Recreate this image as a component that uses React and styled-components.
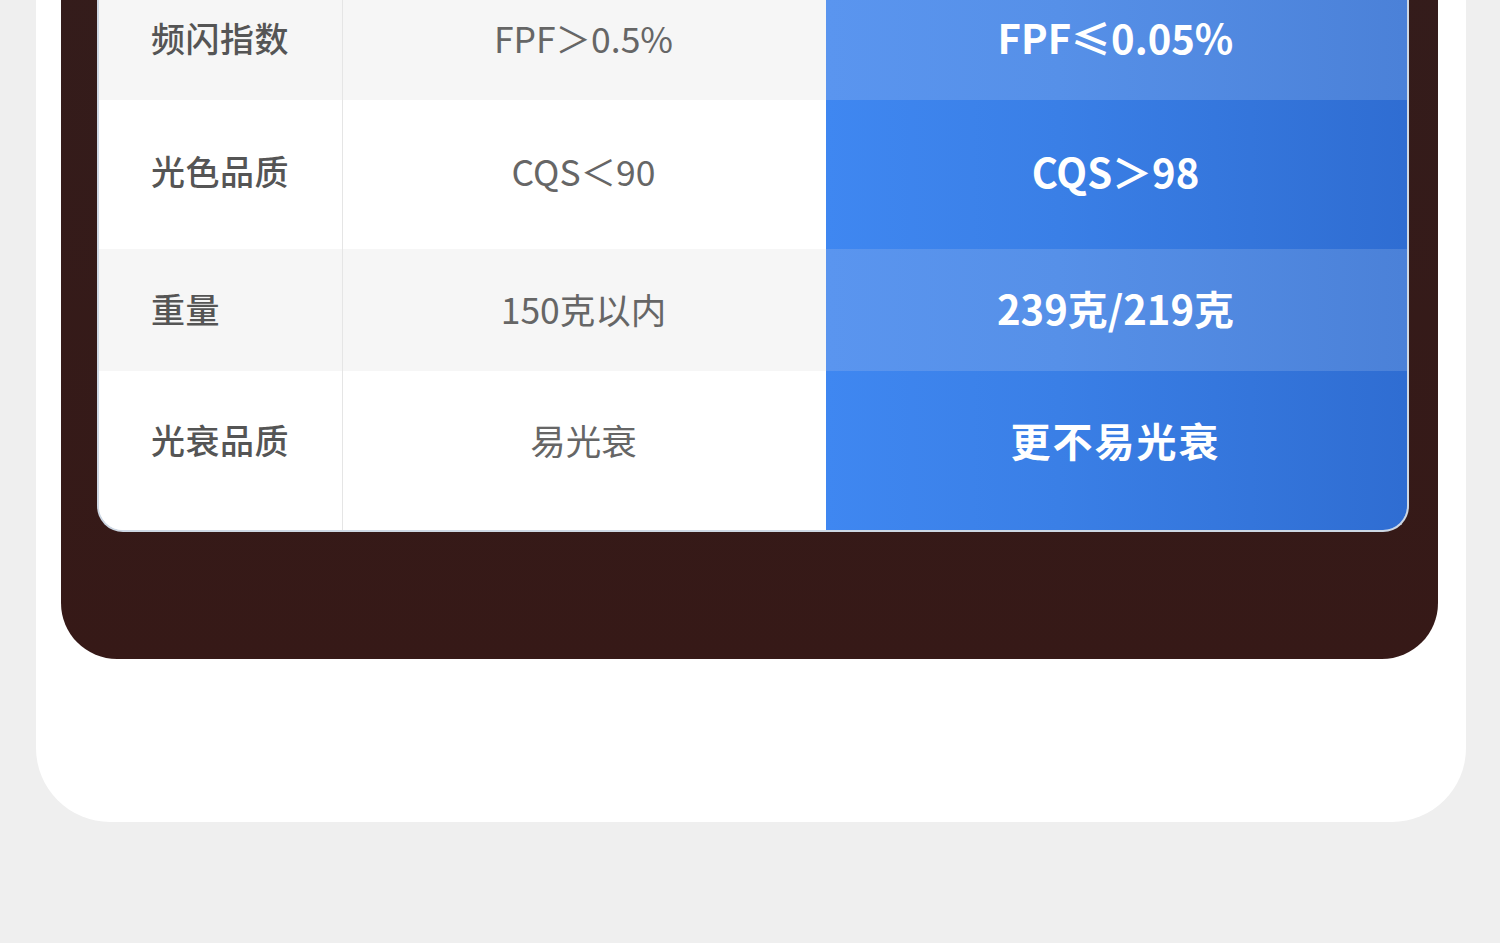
import { Fragment } from "react";
import styled, { createGlobalStyle } from "styled-components";

const Global = createGlobalStyle`
  html, body {
    margin: 0;
    padding: 0;
    background: #efefef;
    overflow: hidden;
    font-family: "Noto Sans CJK SC", "Noto Sans", sans-serif;
  }
`;

const Page = styled.div`
  margin-top: -22px;
  padding: 0 34px 0 36px;
`;

const Card = styled.div`
  background: #ffffff;
  border-radius: 0 0 74px 74px;
  padding: 0 28px 163px 25px;
`;

const Panel = styled.div`
  background: linear-gradient(180deg, #341c1b 0%, #361917 100%);
  border-radius: 0 0 56px 56px;
  padding: 0 29px 127px 36px;
`;

const Table = styled.div`
  display: grid;
  grid-template-columns: 244px 483px 1fr;
  border: 2px solid #cdd7e3;
  border-top: none;
  border-radius: 0 0 26px 26px;
  overflow: hidden;
  background: #fff;
`;

const Label = styled.div`
  display: flex;
  align-items: center;
  height: ${(p) => p.$h}px;
  padding: 0 0 ${(p) => p.$pb}px 52px;
  box-sizing: border-box;
  background: ${(p) => (p.$alt ? "#f6f6f6" : "#ffffff")};
  border-right: 1px solid #e5e5e5;
  color: #555555;
  font-size: 34px;
  font-weight: 500;
  letter-spacing: 0.5px;
`;

const Normal = styled.div`
  display: flex;
  align-items: center;
  justify-content: center;
  height: ${(p) => p.$h}px;
  padding: 0 2px ${(p) => p.$pb}px 0;
  box-sizing: border-box;
  background: ${(p) => (p.$alt ? "#f6f6f6" : "#ffffff")};
  color: #666666;
  font-size: 35.5px;
  font-weight: 400;
`;

const Highlight = styled.div`
  display: flex;
  align-items: center;
  justify-content: center;
  height: ${(p) => p.$h}px;
  padding: 0 2px ${(p) => p.$pb}px 0;
  box-sizing: border-box;
  background: ${(p) =>
    p.$alt
      ? "linear-gradient(90deg, #5a95ef 0%, #5690e8 40%, #4b81d8 100%)"
      : "linear-gradient(90deg, #3f87f1 0%, #3a7fe6 40%, #2f6dd2 100%)"};
  color: #ffffff;
  font-size: 40px;
  font-weight: 700;
  letter-spacing: ${(p) => p.$ls || 0}px;
`;

const rows = [
  { label: "频闪指数", normal: "FPF＞0.5%", best: "FPF≤0.05%", h: 122, pb: 4, alt: true },
  { label: "光色品质", normal: "CQS＜90", best: "CQS＞98", h: 149, pb: 8 },
  { label: "重量", normal: "150克以内", best: "239克/219克", h: 122, pb: 4, alt: true },
  { label: "光衰品质", normal: "易光衰", best: "更不易光衰", h: 159, pb: 22, ls: 2 },
];

export default function App() {
  return (
    <>
      <Global />
      <Page>
        <Card>
          <Panel>
            <Table>
              {rows.map((r) => (
                <Fragment key={r.label}>
                  <Label $h={r.h} $pb={r.pb} $alt={r.alt}>
                    {r.label}
                  </Label>
                  <Normal $h={r.h} $pb={r.pb} $alt={r.alt}>
                    {r.normal}
                  </Normal>
                  <Highlight $h={r.h} $pb={r.pb} $alt={r.alt} $ls={r.ls}>
                    {r.best}
                  </Highlight>
                </Fragment>
              ))}
            </Table>
          </Panel>
        </Card>
      </Page>
    </>
  );
}
